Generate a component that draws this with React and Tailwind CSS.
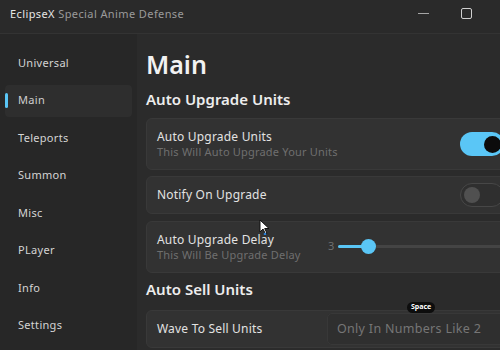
import { useState } from "react";

const NAV = ["Universal", "Main", "Teleports", "Summon", "Misc", "PLayer", "Info", "Settings"];

function Toggle({ on }) {
  return (
    <div
      className={
        on
          ? "w-[44px] h-[24px] rounded-full bg-[#5ac6f6] flex items-center justify-end px-[3px] shrink-0"
          : "w-[44px] h-[24px] rounded-full border border-[#474747] bg-[#2f2f2f] flex items-center justify-start px-[3px] shrink-0"
      }
    >
      <div className={on ? "w-[17px] h-[17px] rounded-full bg-[#0c0c0c]" : "w-[16px] h-[16px] rounded-full bg-[#505050]"} />
    </div>
  );
}

function Card({ title, sub, children, className = "" }) {
  return (
    <div
      className={
        "w-[372px] shrink-0 rounded-[6px] bg-[#323232] border border-[#393939] flex items-center pl-[10px] " +
        className
      }
    >
      <div className="flex-1 min-w-0 flex flex-col">
        <span className="text-[12px] leading-[16px] tracking-[0.2px] text-[#e2e2e2] whitespace-nowrap">{title}</span>
        {sub && (
          <span className="text-[11px] leading-[14px] tracking-[0.2px] text-[#6f6f6f] whitespace-nowrap">{sub}</span>
        )}
      </div>
      {children}
    </div>
  );
}

export default function App() {
  const [active] = useState("Main");

  return (
    <div
      className="relative w-[500px] h-[350px] overflow-hidden bg-[#2b2b2b] flex flex-col"
      style={{ fontFamily: '"Noto Sans", "DejaVu Sans", sans-serif' }}
    >
      {/* title bar */}
      <div className="h-[34px] shrink-0 flex items-start justify-between pt-[7px] pl-[10px] pr-[28px] border-b border-[#333333] bg-[#2a2a2a]">
        <span className="text-[11px] leading-[14px] tracking-[0.4px]">
          <span className="text-[#e6e6e6]">EclipseX</span>{" "}
          <span className="text-[#9a9a9a]">Special Anime Defense</span>
        </span>
        <div className="flex items-center gap-[32px] pt-[1px]">
          <div className="w-[11px] h-[1.5px] bg-[#a5a5a5]" />
          <div className="w-[11px] h-[11px] rounded-[2px] border-[1.5px] border-[#cfcfcf]" />
        </div>
      </div>

      <div className="flex flex-1 min-h-0">
        {/* sidebar */}
        <div className="w-[137px] shrink-0 bg-[#272727] flex flex-col gap-[5.5px] pt-[13px] px-[5px]">
          {NAV.map((item) => (
            <div
              key={item}
              className={
                "relative h-[32px] flex items-center pl-[13px] rounded-[4px] text-[11px] tracking-[0.3px] " +
                (item === active ? "bg-[#2e2e2e] text-[#cfcfcf]" : "text-[#d4d4d4]")
              }
            >
              {item === active && (
                <div className="absolute left-[0px] top-[8px] w-[3px] h-[15px] rounded-full bg-[#5ac6f6]" />
              )}
              {item}
            </div>
          ))}
        </div>

        {/* main */}
        <div className="flex-1 flex flex-col pl-[9px] pt-[15px]">
          <h1 className="text-[25px] leading-[30px] font-semibold text-[#f2f2f2]">Main</h1>
          <h2 className="mt-[10px] text-[15px] leading-[20px] font-semibold text-[#ededed]">Auto Upgrade Units</h2>

          <Card title="Auto Upgrade Units" sub="This Will Auto Upgrade Your Units" className="mt-[9px] h-[52px] pr-[13px]">
            <Toggle on />
          </Card>

          <Card title="Notify On Upgrade" className="mt-[6px] h-[38px] pr-[13px]">
            <Toggle on={false} />
          </Card>

          <Card title="Auto Upgrade Delay" sub="This Will Be Upgrade Delay" className="mt-[7px] h-[52px] pr-[13px]">
            <div className="w-[176px] shrink-0 flex items-center gap-[4px] pb-[2px]">
              <span className="text-[11px] text-[#6f6f6f]">3</span>
              <div className="relative flex-1 h-[3px] rounded-full bg-[#444444]">
                <div className="absolute left-0 top-0 h-[3px] w-[30px] rounded-full bg-[#5ac6f6]" />
                <div className="absolute left-[23px] top-[-6px] w-[15px] h-[15px] rounded-full bg-[#5ac6f6]" />
              </div>
            </div>
          </Card>

          <h2 className="mt-[6px] text-[15px] leading-[20px] font-semibold text-[#ededed]">Auto Sell Units</h2>

          <Card title="Wave To Sell Units" className="mt-[11px] h-[38px] pr-0 overflow-visible">
            <div className="w-[190px] shrink-0 h-[32px] rounded-[5px] bg-[#2f2f2f] border border-[#383838] flex items-center pl-[9px] text-[12.5px] tracking-[0.3px] text-[#767676] whitespace-nowrap">
              Only In Numbers Like 2
            </div>
          </Card>
        </div>
      </div>

      {/* key overlay */}
      <div className="absolute left-[407px] top-[302px] h-[11px] px-[4px] rounded-full bg-[#0d0d0d] flex items-center text-[7px] font-bold text-white">
        Space
      </div>

      {/* mouse cursor */}
      <svg className="absolute left-[259px] top-[219px]" width="11" height="16" viewBox="0 0 11 16">
        <path d="M1 1 L1 13 L4 10 L6.5 15 L8 14.3 L5.7 9.5 L10 9.5 Z" fill="#ffffff" stroke="#111111" strokeWidth="1" strokeLinejoin="round" />
        <circle cx="6" cy="15" r="1.3" fill="#2a7fd6" />
      </svg>
    </div>
  );
}
